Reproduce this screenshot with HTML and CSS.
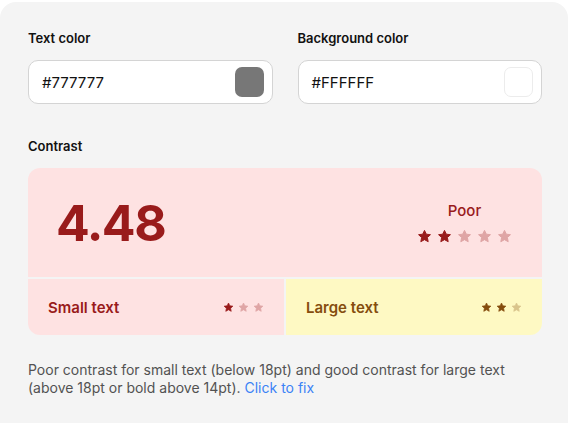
FILE: index.html
```html
<!DOCTYPE html>
<html lang="en">
<head>
    <meta charset="UTF-8">
    <meta name="viewport" content="width=device-width, initial-scale=1.0">
    <title>Contrast checker</title>
    <link rel="stylesheet" href="styles.css">
</head>
<body>
    <svg width="0" height="0" style="position:absolute">
        <symbol id="star" viewBox="0 0 24 24">
            <path d="M12 2.2l2.9 6.1 6.6.8-4.9 4.6 1.3 6.6L12 17l-5.9 3.3 1.3-6.6-4.9-4.6 6.6-.8z" stroke-linejoin="round" stroke-width="1.6"/>
        </symbol>
    </svg>

    <div class="panel">
        <div class="fields">
            <div class="field">
                <label>Text color</label>
                <div class="color-input">
                    <span>#777777</span>
                    <span class="swatch" style="background:#777777"></span>
                </div>
            </div>
            <div class="field">
                <label>Background color</label>
                <div class="color-input">
                    <span>#FFFFFF</span>
                    <span class="swatch swatch-light" style="background:#ffffff"></span>
                </div>
            </div>
        </div>

        <label class="section-label">Contrast</label>
        <div class="result">
            <div class="score poor">
                <div class="ratio">4.48</div>
                <div class="rating">
                    <div class="rating-name">Poor</div>
                    <div class="stars big">
                        <svg class="on"><use href="#star"/></svg>
                        <svg class="on"><use href="#star"/></svg>
                        <svg><use href="#star"/></svg>
                        <svg><use href="#star"/></svg>
                        <svg><use href="#star"/></svg>
                    </div>
                </div>
            </div>
            <div class="size poor">
                <span>Small text</span>
                <div class="stars">
                    <svg class="on"><use href="#star"/></svg>
                    <svg><use href="#star"/></svg>
                    <svg><use href="#star"/></svg>
                </div>
            </div>
            <div class="size ok">
                <span>Large text</span>
                <div class="stars">
                    <svg class="on"><use href="#star"/></svg>
                    <svg class="on"><use href="#star"/></svg>
                    <svg><use href="#star"/></svg>
                </div>
            </div>
        </div>

        <p class="note">Poor contrast for small text (below 18pt) and good contrast for large text (above 18pt or bold above 14pt). <a href="#">Click to fix</a></p>
    </div>
</body>
</html>
```

FILE: styles.css
```css
body {
    margin: 0;
    background: #ffffff;
    font-family: Inter, "Noto Sans", sans-serif;
}
.panel {
    margin-top: 2px;
    width: 568px;
    box-sizing: border-box;
    padding: 28px 26px 28px 28px;
    background: #f4f4f4;
    border-radius: 16px 16px 0 0;
    min-height: 430px;
}
.fields {
    display: grid;
    grid-template-columns: 1fr 1fr;
    gap: 25px;
}
label {
    display: block;
    font-size: 13px;
    font-weight: 600;
    line-height: 16px;
    color: #111111;
    margin-bottom: 14px;
}
.color-input {
    display: flex;
    align-items: center;
    justify-content: space-between;
    height: 44px;
    box-sizing: border-box;
    padding: 0 8px 0 13px;
    background: white;
    border: 1px solid #d4d4d4;
    border-radius: 10px;
    font-size: 15px;
    color: #111111;
}
.swatch {
    width: 29px;
    height: 30px;
    border-radius: 7px;
}
.swatch-light {
    box-sizing: border-box;
    border: 1px solid #ececec;
}
.section-label {
    margin-top: 34px;
}
.result {
    display: grid;
    grid-template-columns: 1fr 1fr;
    gap: 2px;
    border-radius: 12px;
    overflow: hidden;
}
.poor {
    background: #fee2e2;
    color: #991b1b;
}
.ok {
    background: #fef9c3;
    color: #854d0e;
}
.score {
    grid-column: span 2;
    height: 109px;
    display: flex;
    align-items: center;
    justify-content: space-between;
    padding: 0 30px 0 28px;
}
.ratio {
    font-size: 50px;
    font-weight: 700;
    letter-spacing: -1.5px;
}
.rating {
    display: flex;
    flex-direction: column;
    align-items: center;
    gap: 9px;
}
.rating-name {
    font-size: 15px;
    font-weight: 500;
}
.stars {
    display: flex;
    gap: 4px;
}
.stars svg {
    width: 11px;
    height: 11px;
    fill: currentColor;
    stroke: currentColor;
    opacity: 0.3;
}
.stars svg.on {
    opacity: 1;
}
.stars.big {
    gap: 5px;
}
.stars.big svg {
    width: 15px;
    height: 15px;
}
.size {
    height: 56px;
    display: flex;
    align-items: center;
    justify-content: space-between;
    padding: 0 20px;
    font-size: 15px;
    font-weight: 600;
}
.note {
    margin: 26px 0 0;
    font-size: 14px;
    line-height: 18px;
    color: #525252;
}
.note a {
    color: #3b82f6;
    text-decoration: none;
}
```
